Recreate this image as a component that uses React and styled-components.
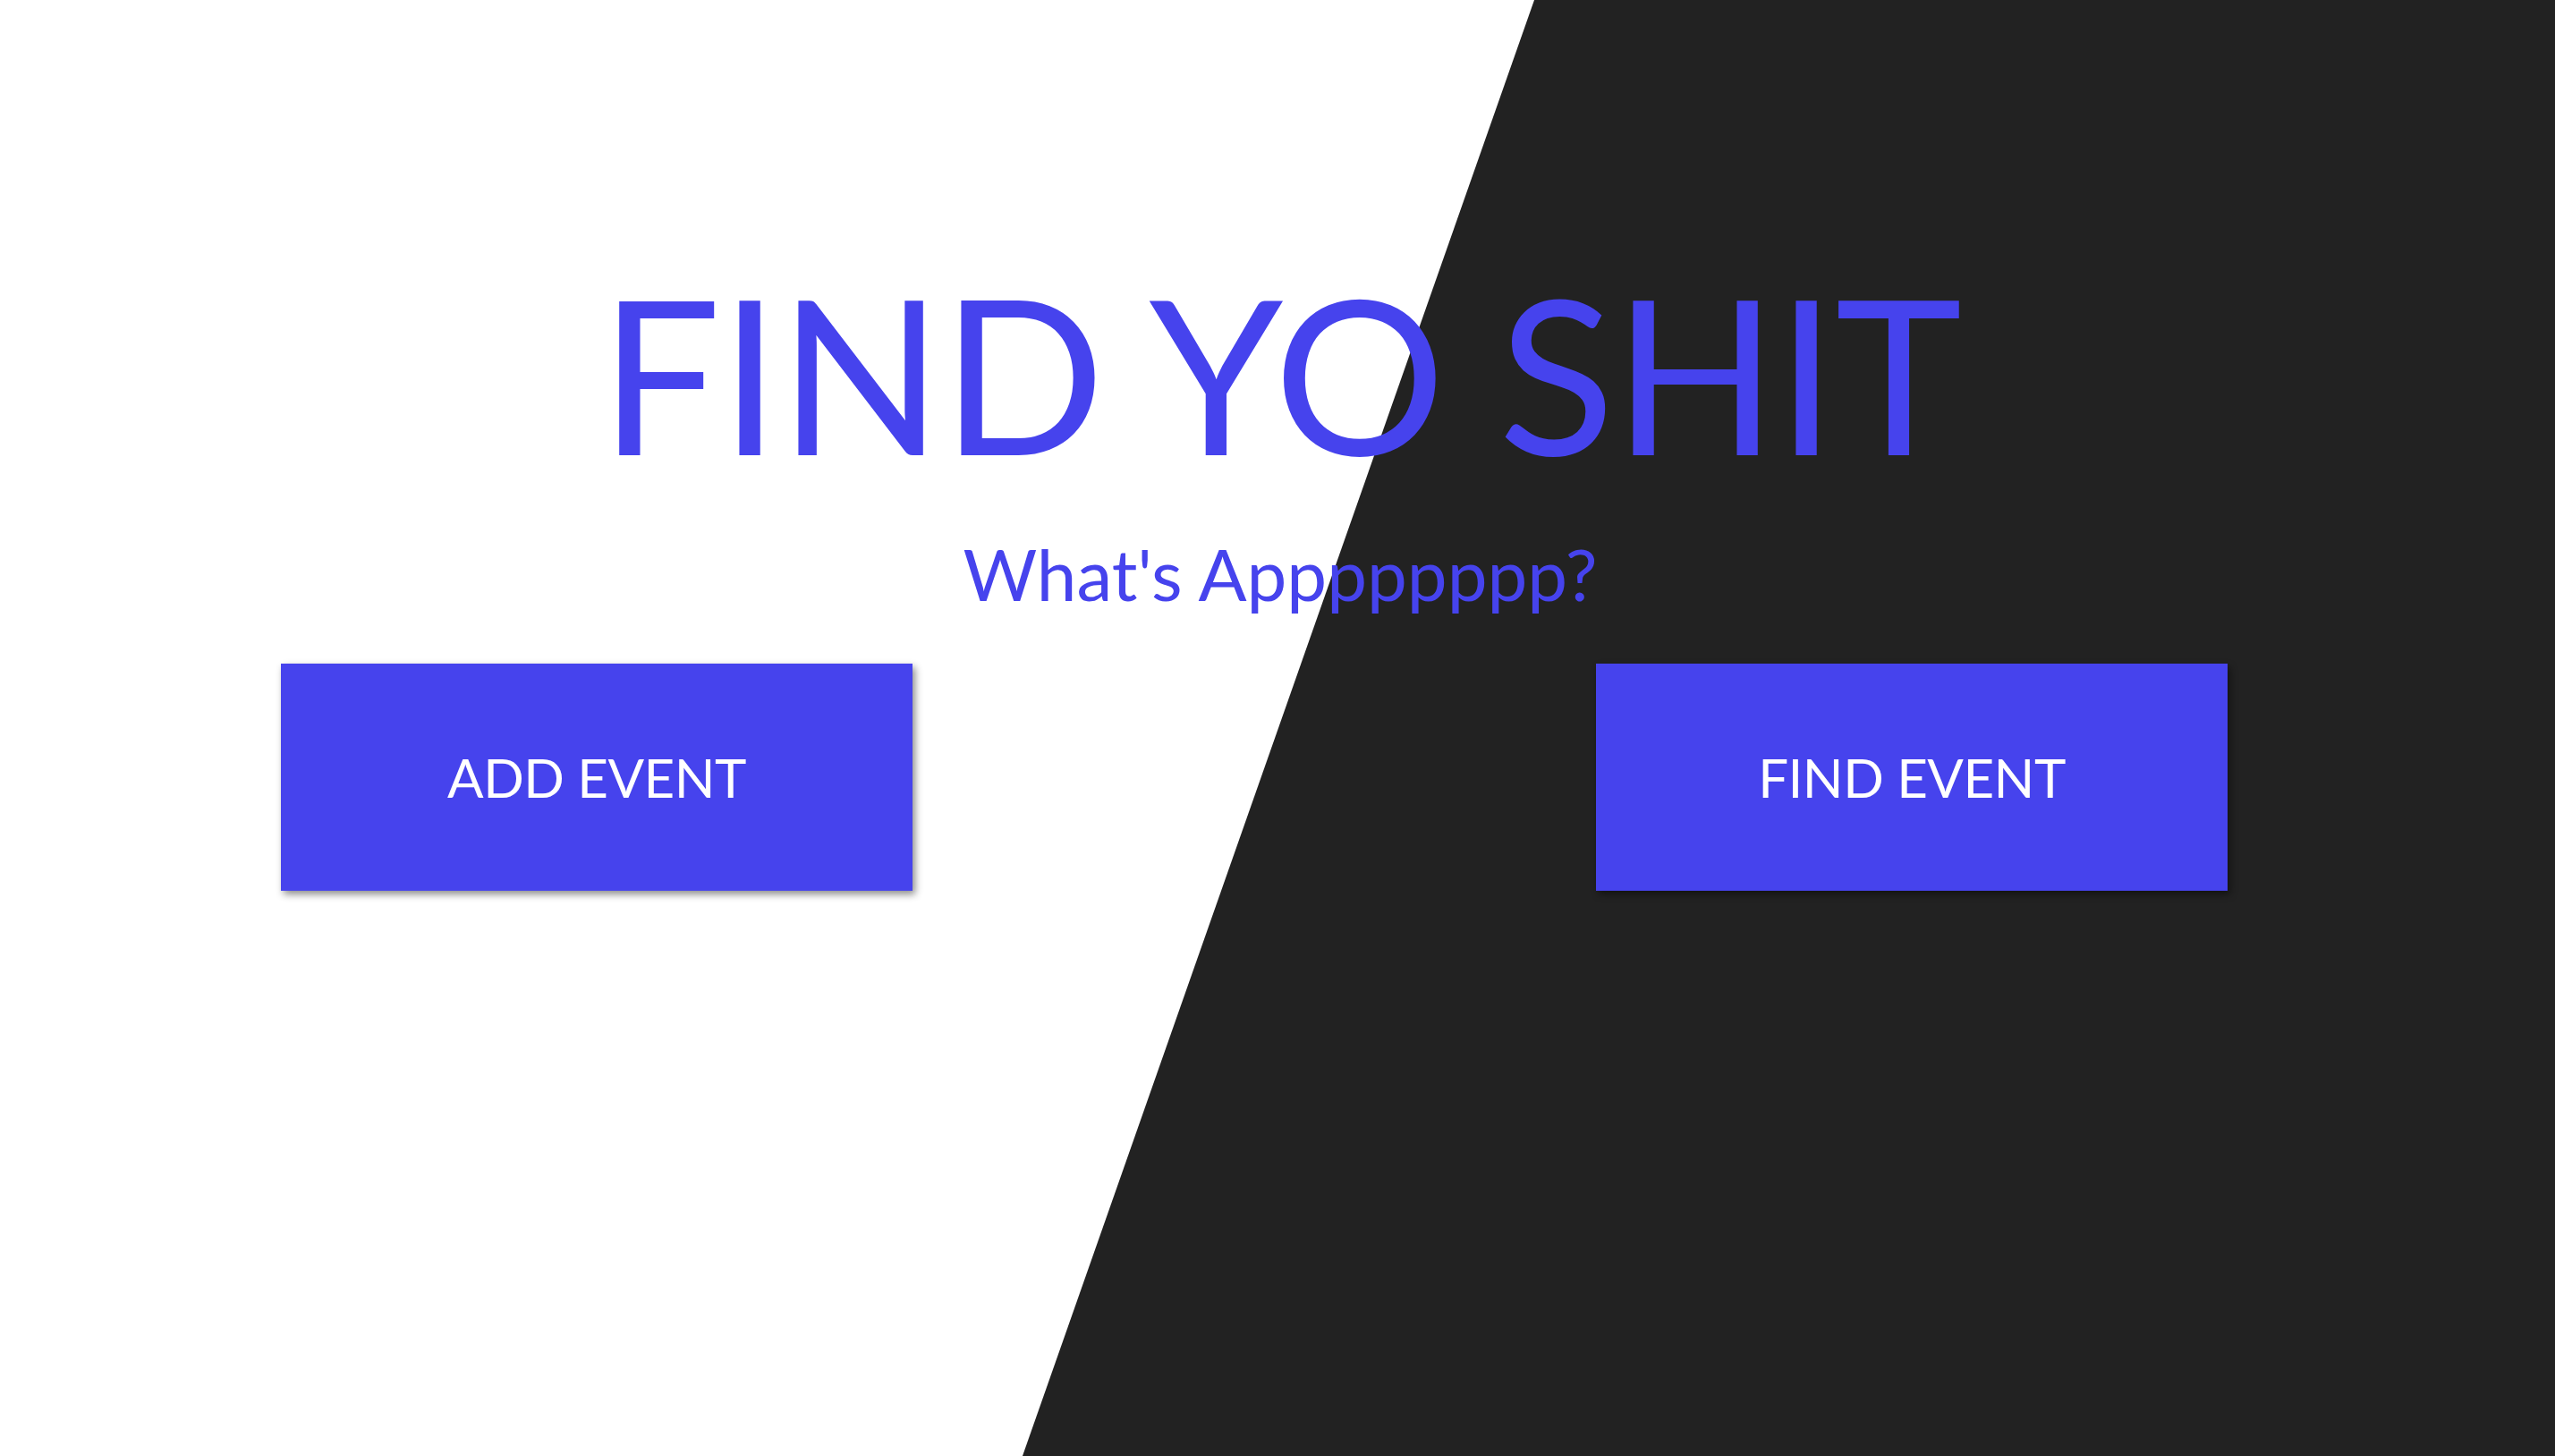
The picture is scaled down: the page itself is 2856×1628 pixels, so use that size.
import React from 'react';
import styled, { createGlobalStyle } from 'styled-components';

const GlobalStyle = createGlobalStyle`
  html, body {
    margin: 0;
    padding: 0;
  }

  body {
    font-family: Lato, "Open Sans", sans-serif;
    background: #ffffff;
  }
`;

const Page = styled.div`
  position: relative;
  min-height: 100vh;
  overflow: hidden;
  background: #ffffff;

  &::before {
    content: '';
    position: absolute;
    inset: 0;
    background: #222222;
    clip-path: polygon(60.05% 0, 100% 0, 100% 100%, 40.02% 100%);
  }
`;

const Content = styled.main`
  position: relative;
  padding: 272px 0 0 6px;
  display: flex;
  flex-direction: column;
  align-items: center;
`;

const Title = styled.h1`
  margin: 0;
  font-size: 240px;
  font-weight: 400;
  line-height: 1.2;
  letter-spacing: -1.3px;
  color: #4643ed;
  text-align: center;
`;

const Subtitle = styled.h2`
  margin: 33px 0 0;
  font-size: 80px;
  font-weight: 400;
  line-height: 1.2;
  color: #4643ed;
  text-align: center;
`;

const ButtonRow = styled.div`
  align-self: stretch;
  display: flex;
  margin-top: 53px;
  padding-left: 308px;
  gap: 764px;
`;

const Button = styled.button`
  width: 706px;
  height: 254px;
  border: none;
  border-radius: 0;
  background: #4643ed;
  color: #ffffff;
  font-family: Lato, "Open Sans", sans-serif;
  font-size: 60px;
  font-weight: 400;
  letter-spacing: -0.5px;
  box-shadow: 3px 4px 8px rgba(0, 0, 0, 0.45);
  cursor: pointer;
`;

const App = () => {
  return (
    <>
      <GlobalStyle />
      <Page>
        <Content>
          <Title>FIND YO SHIT</Title>
          <Subtitle>What's Apppppppp?</Subtitle>
          <ButtonRow>
            <Button>ADD EVENT</Button>
            <Button>FIND EVENT</Button>
          </ButtonRow>
        </Content>
      </Page>
    </>
  );
};

export default App;
